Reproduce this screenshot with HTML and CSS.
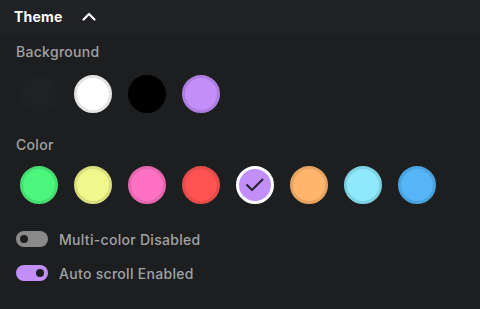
FILE: index.html
```html
<!DOCTYPE html>
<html lang="en">
<head>
    <meta charset="UTF-8">
    <title>Theme</title>
    <link rel="stylesheet" href="styles.css">
</head>
<body>
    <div class="panel">
        <div class="panel-header">
            <span class="panel-title">Theme</span>
            <svg class="chevron" width="14" height="9" viewBox="0 0 14 9">
                <path d="M1.5 7.5 L7 2 L12.5 7.5" fill="none" stroke="#fff" stroke-width="2.2" stroke-linecap="round" stroke-linejoin="round"/>
            </svg>
        </div>

        <div class="panel-body">
            <div class="label">Background</div>
            <div class="swatches">
                <span class="swatch bg-dark"></span>
                <span class="swatch bg-white"></span>
                <span class="swatch bg-black"></span>
                <span class="swatch bg-purple"></span>
            </div>

            <div class="label label-color">Color</div>
            <div class="swatches swatches-color">
                <span class="swatch c-green"></span>
                <span class="swatch c-yellow"></span>
                <span class="swatch c-pink"></span>
                <span class="swatch c-red"></span>
                <span class="swatch c-purple selected">
                    <svg width="22" height="22" viewBox="0 0 22 22">
                        <path d="M3 11 L8 16 L18.5 5.5" fill="none" stroke="#26222e" stroke-width="2" stroke-linecap="round" stroke-linejoin="round"/>
                    </svg>
                </span>
                <span class="swatch c-orange"></span>
                <span class="swatch c-cyan"></span>
                <span class="swatch c-blue"></span>
            </div>

            <div class="toggles">
                <div class="toggle-row">
                    <span class="toggle off"><span class="knob"></span></span>
                    <span class="toggle-text">Multi-color Disabled</span>
                </div>
                <div class="toggle-row">
                    <span class="toggle on"><span class="knob"></span></span>
                    <span class="toggle-text">Auto scroll Enabled</span>
                </div>
            </div>
        </div>
    </div>
</body>
</html>
```

FILE: styles.css
```css
body {
    margin: 0;
    background-color: #1d1e20;
    font-family: Inter, "Noto Sans", sans-serif;
}
.panel {
    width: 100%;
    height: 309px;
    background-color: #1d1e20;
}
.panel-header {
    height: 33px;
    display: flex;
    align-items: center;
    gap: 19px;
    padding: 0 14px;
    background-color: #212226;
}
.panel-title {
    color: #ffffff;
    font-size: 14px;
    font-weight: 700;
    letter-spacing: 0.2px;
}
.chevron {
    margin-top: -1px;
}
.panel-body {
    padding: 9px 16px 0 16px;
}
.label {
    color: #a2a2a4;
    font-size: 14px;
    font-weight: 500;
    line-height: 20px;
    letter-spacing: 0.3px;
}
.label-color {
    margin-top: 22px;
}
.swatches {
    display: flex;
    gap: 16px;
    margin-top: 13px;
    padding-left: 4px;
}
.swatches-color {
    margin-top: 11px;
}
.swatch {
    width: 38px;
    height: 38px;
    border-radius: 50%;
    box-sizing: border-box;
    border: 3px solid rgba(0, 0, 0, 0.1);
    display: flex;
    align-items: center;
    justify-content: center;
}
.bg-dark { background-color: #202124; border-color: #1f2022; }
.bg-white { background-color: #ffffff; border-color: #e4e4e4; }
.bg-black { background-color: #000000; border-color: #000000; }
.bg-purple { background-color: #c28ef8; border-color: #ad7ee0; }

.c-green { background-color: #4cf57c; border-color: #46dc71; }
.c-yellow { background-color: #f2f78b; border-color: #d9dd7d; }
.c-pink { background-color: #ff72c3; border-color: #e567af; }
.c-red { background-color: #ff5353; border-color: #e54b4b; }
.c-purple { background-color: #c28ef8; }
.c-orange { background-color: #ffb56c; border-color: #e5a261; }
.c-cyan { background-color: #8ee9fc; border-color: #7fd1e2; }
.c-blue { background-color: #55b5f7; border-color: #4ca2de; }
.selected {
    border-color: #ffffff;
}

.toggles {
    margin-top: 25px;
    display: flex;
    flex-direction: column;
    gap: 14px;
}
.toggle-row {
    display: flex;
    align-items: center;
    gap: 11px;
    height: 20px;
}
.toggle {
    width: 32px;
    height: 16px;
    border-radius: 8px;
    display: flex;
    align-items: center;
    padding: 0 4px;
    box-sizing: border-box;
}
.toggle.off {
    background-color: #8a8a8a;
}
.toggle.on {
    background-color: #c28ef8;
    justify-content: flex-end;
}
.knob {
    width: 8px;
    height: 8px;
    border-radius: 50%;
    background-color: #1d1e20;
}
.toggle-text {
    color: #a2a2a4;
    font-size: 14px;
    font-weight: 500;
    letter-spacing: 0.3px;
}
```
